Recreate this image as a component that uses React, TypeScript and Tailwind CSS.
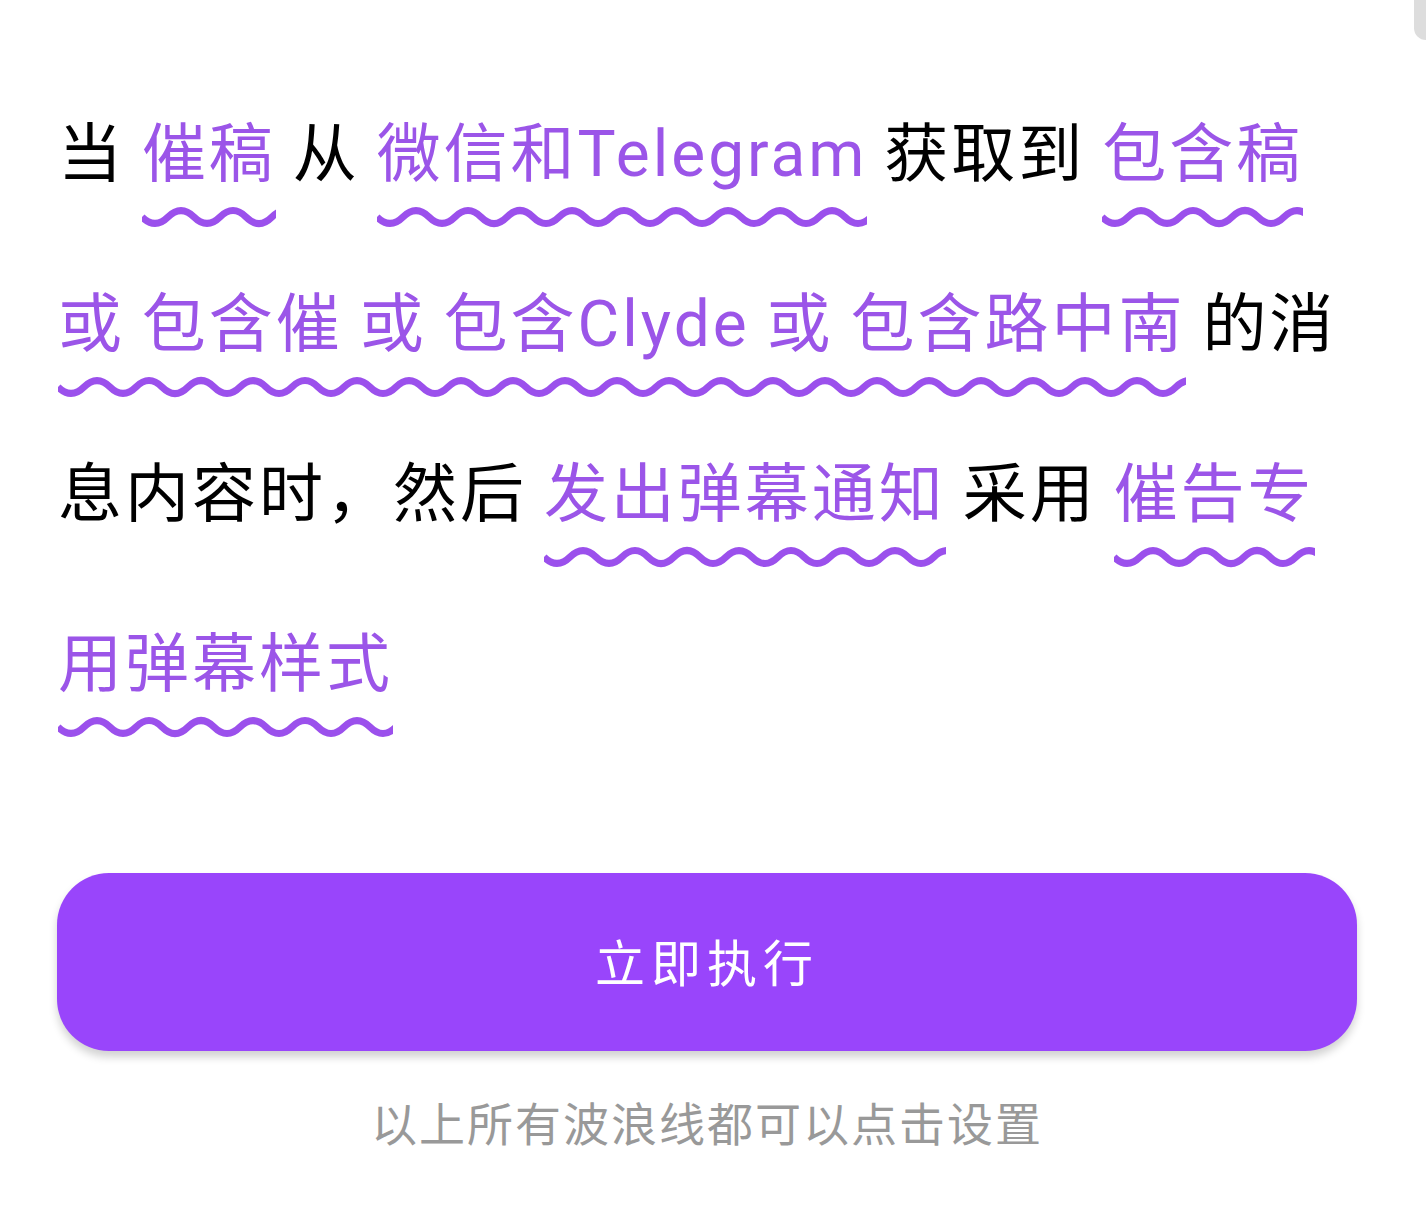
import React from "react";

const WL = 52;
const C = 11;
const A = 6.5;
let d = `M0 ${C}`;
for (let i = 0; i < 60; i++) {
  const x0 = i * WL;
  d += ` Q${x0 + WL / 4} ${C + 2 * A} ${x0 + WL / 2} ${C} Q${x0 + (3 * WL) / 4} ${C - 2 * A} ${x0 + WL} ${C}`;
}

function Wavy({ children }: { children: React.ReactNode }) {
  return (
    <span className="relative inline-block cursor-pointer text-[#9b55e8]">
      {children}
      <svg
        className="pointer-events-none absolute left-0 top-[136px] h-[22px] w-full overflow-hidden"
        aria-hidden="true"
      >
        <path d={d} fill="none" stroke="#9b50ec" strokeWidth="7" />
      </svg>
    </span>
  );
}

export default function App() {
  return (
    <div
      className="relative min-h-[1214px] w-full bg-white"
      style={{ fontFamily: '"Roboto", "Noto Sans CJK SC", sans-serif' }}
    >
      <div className="absolute right-0 top-0 h-[40px] w-[12px] rounded-bl-[12px] bg-[#dddddd]" />
      <div className="pl-[58px] pr-[69px] pt-[70px]">
        <p className="text-[64px] leading-[170px] tracking-[3px] text-black [word-spacing:-2px]">
          当 <Wavy>催稿</Wavy> 从 <Wavy>微信和Telegram</Wavy> 获取到{" "}
          <Wavy>包含稿</Wavy> <Wavy>或 包含催 或 包含Clyde 或 包含路中南</Wavy>{" "}
          的消息内容时，然后 <Wavy>发出弹幕通知</Wavy> 采用{" "}
          <Wavy>催告专</Wavy>
          <Wavy>用弹幕样式</Wavy>
        </p>
      </div>
      <div className="pl-[57px] pr-[69px] pt-[123px]">
        <button className="flex h-[178px] w-full items-center justify-center rounded-[52px] bg-[#9945fb] pt-[6px] text-[50px] tracking-[6px] text-white shadow-[0_6px_8px_rgba(0,0,0,0.18)]">
          立即执行
        </button>
      </div>
      <p className="pl-[57px] pr-[69px] pt-[40px] text-center text-[46px] tracking-[2px] text-[#999999]">
        以上所有波浪线都可以点击设置
      </p>
    </div>
  );
}
